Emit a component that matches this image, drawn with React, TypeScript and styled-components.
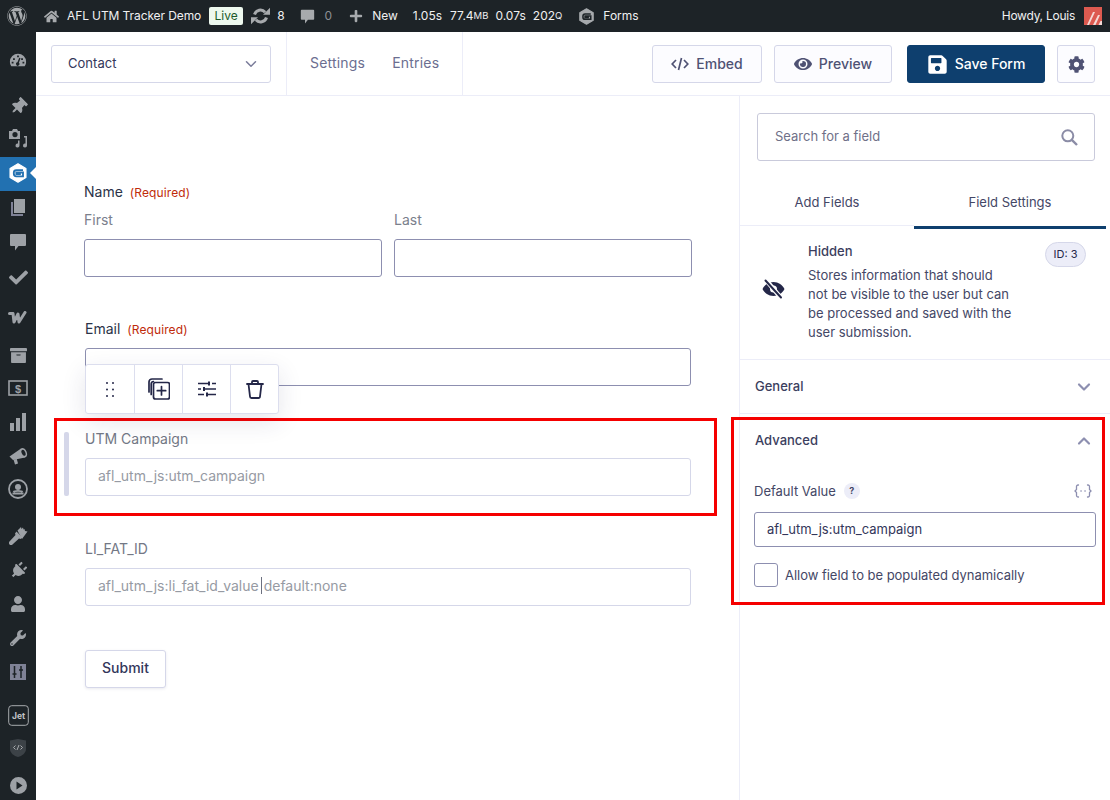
import React from "react";
import styled, { createGlobalStyle } from "styled-components";
import { FaWordpress, FaHome, FaPlus, FaEye, FaSave, FaCog, FaThumbtack, FaCheck, FaPlug, FaUser, FaWrench, FaArchive } from "react-icons/fa";
import { FiChevronDown, FiChevronUp } from "react-icons/fi";

const GlobalStyle = createGlobalStyle`
    html, body {
        margin: 0;
        padding: 0;
        height: 800px;
        overflow: hidden;
        background: #fff;
        font-family: Inter, "Liberation Sans", sans-serif;
    }
    * { box-sizing: border-box; }
`;

const Page = styled.div`
    position: relative;
    width: 1110px;
    height: 800px;
    overflow: hidden;
`;

/* admin bar */
const AdminBar = styled.header`
    height: 32px;
    background: #1d2327;
    display: flex;
    align-items: center;
    color: #f0f0f1;
    font-size: 12px;
    line-height: 32px;
`;

const BarItem = styled.span<{ $x: number; $dim?: boolean; $tight?: boolean }>`
    display: inline-flex;
    align-items: center;
    margin-left: ${(p) => p.$x}px;
    color: ${(p) => (p.$dim ? "#8c8f94" : "#f0f0f1")};
    letter-spacing: ${(p) => (p.$tight ? "-0.1px" : "0")};
    white-space: nowrap;
    svg { display: block; color: #a7aaad; }
`;

const LiveBadge = styled.span`
    margin-left: 8px;
    width: 34px;
    height: 18px;
    background: #edf8ee;
    color: #1a5a2a;
    border-radius: 2px;
    font-size: 12px;
    line-height: 18px;
    text-align: center;
`;

const SmallCaps = styled.span`
    font-size: 9.5px;
`;

const Howdy = styled.span`
    margin-left: auto;
    margin-right: 9px;
    color: #f0f0f1;
    letter-spacing: -0.25px;
`;

const Avatar = styled.svg`
    display: block;
    margin-right: 8px;
`;

const Body = styled.div`
    display: flex;
    height: 768px;
`;

/* left menu */
const SideMenu = styled.nav`
    width: 36px;
    flex: none;
    background: #1d2327;
    display: flex;
    flex-direction: column;
    padding-top: 11px;
`;

const SideItem = styled.div<{ $top: number; $active?: boolean; $turn?: number }>`
    position: relative;
    height: 34px;
    margin-top: ${(p) => p.$top}px;
    padding-bottom: ${(p) => (p.$active ? 2 : 0)}px;
    flex: none;
    display: flex;
    align-items: center;
    justify-content: center;
    background: ${(p) => (p.$active ? "#2271b1" : "transparent")};
    color: ${(p) => (p.$active ? "#fff" : "#9da1a6")};
    svg { transform: rotate(${(p) => p.$turn ?? 0}deg); }
    ${(p) =>
        p.$active &&
        `&::after {
            content: "";
            position: absolute;
            right: 0;
            top: 10px;
            border: 6px solid transparent;
            border-right-color: #fff;
            border-left: 0;
        }`}
`;

/* main area */
const Main = styled.main`
    flex: 1;
    display: flex;
    flex-direction: column;
    min-width: 0;
`;

const TopBar = styled.div`
    height: 64px;
    flex: none;
    display: flex;
    align-items: stretch;
    border-bottom: 1px solid #ecedf8;
    padding-right: 15px;
`;

const FormSelectCell = styled.div`
    width: 251px;
    padding: 13px 0 0 15px;
    border-right: 1px solid #ecedf8;
`;

const FormSelect = styled.div`
    width: 220px;
    height: 38px;
    border: 1px solid #d5d7e9;
    border-radius: 3px;
    display: flex;
    align-items: center;
    justify-content: space-between;
    padding: 0 10px 3px 16px;
    font-size: 13px;
    letter-spacing: 0.03px;
    color: #33365a;
    svg { color: #7a7c9a; margin-top: 3px; }
`;

const TopLinks = styled.div`
    width: 176px;
    display: flex;
    align-items: center;
    gap: 27px;
    padding: 0 0 2px 23px;
    border-right: 1px solid #ecedf8;
    font-size: 14px;
    letter-spacing: 0.2px;
    color: #6b6e90;
`;

const TopActions = styled.div`
    flex: 1;
    display: flex;
    justify-content: flex-end;
    padding-top: 13px;
`;

const ActionButton = styled.button<{ $w: number; $ml: number; $primary?: boolean }>`
    width: ${(p) => p.$w}px;
    height: 38px;
    margin-left: ${(p) => p.$ml}px;
    display: flex;
    align-items: center;
    justify-content: center;
    gap: 7px;
    padding: 0 0 2px;
    font: 500 14px Inter, "Liberation Sans", sans-serif;
    border-radius: 3px;
    border: 1px solid ${(p) => (p.$primary ? "#0e3f6e" : "#d5d7e9")};
    background: ${(p) => (p.$primary ? "#0e3f6e" : "#fcfcff")};
    color: ${(p) => (p.$primary ? "#fff" : "#4f5274")};
    svg { display: block; flex: none; margin-top: 2px; }
`;

const Workspace = styled.div`
    flex: 1;
    display: flex;
    min-height: 0;
`;

const Canvas = styled.section`
    width: 703px;
    flex: none;
    padding: 86px 0 0 49px;
`;

const FormColumn = styled.div`
    width: 606px;
`;

const FieldLabel = styled.div<{ $mt?: number; $muted?: boolean; $out?: boolean }>`
    height: 20px;
    margin-top: ${(p) => p.$mt ?? 0}px;
    margin-left: ${(p) => (p.$out ? -1 : 0)}px;
    font-size: 14px;
    line-height: 20px;
    color: ${(p) => (p.$muted ? "#737885" : "#2b3348")};
`;

const Required = styled.span`
    margin-left: 7px;
    font-size: 12px;
    letter-spacing: 0.1px;
    color: #c02b0a;
`;

const NameRow = styled.div`
    display: grid;
    grid-template-columns: 298px 298px;
    column-gap: 12px;
    margin: 8px 0 0 -1px;
`;

const SubLabel = styled.div`
    font-size: 14px;
    line-height: 20px;
    color: #7b808c;
`;

const TextBox = styled.div<{ $ghost?: boolean }>`
    height: 38px;
    margin-top: 9px;
    padding-left: 12px;
    border: 1px solid ${(p) => (p.$ghost ? "#d5d7e9" : "#8d8fb0")};
    border-radius: 3px;
    font-size: 14px;
    line-height: 34px;
    color: #969aa3;
    background: #fff;
`;

const Caret = styled.span`
    margin: 0 2px;
    border-left: 1px solid #6c7080;
`;

const EmailField = styled.div`
    position: relative;
`;

const FieldToolbar = styled.div`
    position: absolute;
    left: 0;
    top: 45px;
    z-index: 2;
    display: flex;
    width: 194px;
    height: 50px;
    background: #fff;
    border: 1px solid #dcdeee;
    border-radius: 3px;
    box-shadow: 0 8px 24px rgba(40, 44, 90, 0.12);
`;

const ToolCell = styled.div`
    width: 48px;
    flex: none;
    display: flex;
    align-items: center;
    justify-content: center;
    color: #242748;
    & + & { border-left: 1px solid #dcdeee; }
`;

const SelectedField = styled.div`
    position: relative;
    &::before {
        content: "";
        position: absolute;
        left: -21px;
        top: 3px;
        width: 5px;
        height: 64px;
        border-radius: 2px;
        background: #d5d7e9;
    }
`;

const SubmitButton = styled.button`
    display: block;
    width: 81px;
    height: 38px;
    margin-top: 44px;
    padding: 0 0 3px;
    border: 1px solid #d5d7e9;
    border-radius: 3px;
    background: #fff;
    box-shadow: 0 1px 3px rgba(40, 44, 90, 0.1);
    font: 500 14px Inter, "Liberation Sans", sans-serif;
    color: #33365a;
`;

/* right panel */
const Panel = styled.aside`
    flex: 1;
    border-left: 1px solid #ecedf8;
    min-width: 0;
`;

const SearchBox = styled.div`
    height: 48px;
    margin: 17px 15px 0 17px;
    display: flex;
    align-items: center;
    justify-content: space-between;
    padding: 0 16px 2px 17px;
    border: 1px solid #c9cadb;
    border-radius: 3px;
    font-size: 13px;
    color: #6f7088;
    svg { display: block; margin-top: 2px; }
`;

const Tabs = styled.div`
    display: flex;
    align-items: flex-start;
    height: 68px;
    padding-top: 15px;
`;

const Tab = styled.div<{ $active?: boolean }>`
    width: ${(p) => (p.$active ? 192 : 174)}px;
    height: ${(p) => (p.$active ? 53 : 50)}px;
    text-align: center;
    font-size: 13px;
    line-height: 52px;
    color: #444766;
    border-bottom: ${(p) => (p.$active ? "3px solid #0e3f6e" : "1px solid #ecedf8")};
`;

const FieldInfo = styled.div`
    position: relative;
    height: 131px;
    display: flex;
    padding: 13px 0 0 22px;
    border-bottom: 1px solid #ecedf8;
`;

const InfoIcon = styled.div`
    width: 46px;
    flex: none;
    padding-top: 37px;
    svg { display: block; }
`;

const InfoTitle = styled.div`
    font-size: 13px;
    line-height: 18px;
    font-weight: 500;
    color: #3b3e5e;
`;

const InfoText = styled.p`
    width: 208px;
    margin: 6px 0 0;
    font-size: 13px;
    line-height: 19px;
    color: #444766;
`;

const IdBadge = styled.span`
    position: absolute;
    top: 13px;
    left: 305px;
    width: 41px;
    height: 25px;
    border: 1px solid #d5d7e9;
    border-radius: 13px;
    background: #ecedf8;
    font-size: 11px;
    line-height: 23px;
    text-align: center;
    color: #242748;
`;

const AccordionHead = styled.div<{ $line?: boolean }>`
    height: 54px;
    display: flex;
    align-items: center;
    justify-content: space-between;
    padding: 0 16px 2px 15px;
    font-size: 13px;
    font-weight: 500;
    color: #3b3e5e;
    border-bottom: ${(p) => (p.$line ? "1px solid #ecedf8" : "0")};
    svg { color: #8d8fb0; stroke-width: 2.6; margin-top: 2px; }
`;

const AdvancedBody = styled.div`
    padding: 0 14px;
`;

const ValueLabelRow = styled.div`
    display: flex;
    align-items: center;
    height: 20px;
    margin-top: 13px;
    font-size: 13px;
    color: #444766;
    svg { margin: 0 4px 0 auto; display: block; color: #8d8fb0; }
`;

const HelpDot = styled.span`
    width: 16px;
    height: 16px;
    margin-left: 8px;
    border-radius: 50%;
    background: #ecedf8;
    font-size: 9px;
    font-weight: 700;
    line-height: 16px;
    text-align: center;
    color: #444766;
`;

const ValueInput = styled.div`
    width: 342px;
    height: 35px;
    margin-top: 11px;
    padding-left: 12px;
    border: 1px solid #8d8fb0;
    border-radius: 3px;
    font-size: 13px;
    line-height: 32px;
    color: #33365a;
`;

const CheckRow = styled.label`
    display: flex;
    align-items: center;
    gap: 7px;
    margin-top: 16px;
    font-size: 13px;
    letter-spacing: -0.03px;
    color: #444766;
`;

const CheckBox = styled.span`
    width: 24px;
    height: 24px;
    border: 1px solid #8d8fb0;
    border-radius: 3px;
`;

const Callout = styled.div<{ $l: number; $t: number; $w: number; $h: number }>`
    position: absolute;
    left: ${(p) => p.$l}px;
    top: ${(p) => p.$t}px;
    width: ${(p) => p.$w}px;
    height: ${(p) => p.$h}px;
    border: 3px solid #f50000;
    pointer-events: none;
`;

const GravityIcon = ({ size, fg, bg }: { size: number; fg: string; bg: string }) => (
    <svg width={size} height={size} viewBox="0 0 24 24">
        <path d="M12 1 21.500 6.500v11L12 23 2.500 17.500v-11z" fill={fg} stroke={fg} strokeWidth="1.500" strokeLinejoin="round" />
        <path d="M18 8.500H10a3 3 0 0 0-3 3v1.500a3 3 0 0 0 3 3h8v-4.600h-8v1.900h5.400" fill="none" stroke={bg} strokeWidth="2.200" />
    </svg>
);

const DashIcon = () => (
    <svg width="18" height="18" viewBox="0 0 20 20" fill="currentColor">
        <path fillRule="evenodd" d="M10 3a9 9 0 0 0-9 9c0 2 .6 3.600 1.600 5h14.800c1-1.400 1.600-3 1.600-5a9 9 0 0 0-9-9zM9 5h2v2H9zM4.500 8h2v2h-2zm9 0h2v2h-2zM3 12h2v2H3zm12 0h2v2h-2zm-3.600-4.500 1.400.5-1.800 5a1.900 1.900 0 1 1-1.600-.4z" />
    </svg>
);

const MediaIcon = () => (
    <svg width="20" height="20" viewBox="0 0 20 20" fill="currentColor">
        <path fillRule="evenodd" d="M5 1h4l1 2h2v8H1V3h3zm2 3a2.600 2.600 0 1 0 0 5.200a2.600 2.600 0 0 0 0-5.200z" />
        <path d="M16 8h3v9.500a2 2 0 1 1-1.500-1.900V9.500H16zM10 12.500h1.500v5a2 2 0 1 1-1.500-1.900z" />
    </svg>
);

const PagesIcon = () => (
    <svg width="16" height="18" viewBox="0 0 16 18">
        <path d="M1 4h2v12h10v2H1z" fill="#7f8296" />
        <path d="M4 1h11v14H4z" fill="currentColor" />
    </svg>
);

const BubbleIcon = ({ size }: { size: number }) => (
    <svg width={size} height={size} viewBox="0 0 18 18" fill="currentColor">
        <path d="M2 1h14a1 1 0 0 1 1 1v10a1 1 0 0 1-1 1H9.500L6 17.500V13H2a1 1 0 0 1-1-1V2a1 1 0 0 1 1-1z" />
    </svg>
);

const UpdateIcon = () => (
    <svg width="19" height="18" viewBox="0 0 19 18" fill="none" stroke="currentColor" strokeWidth="3">
        <path d="M3.500 7.500a6.200 6.200 0 0 1 10.600-2.300" />
        <path d="M15.500 10.500a6.200 6.200 0 0 1-10.600 2.300" />
        <path d="M12 7.800h7V.8zM7 10.200H0v7z" fill="currentColor" stroke="none" />
    </svg>
);

const WooIcon = () => (
    <svg width="20" height="14" viewBox="0 0 20 14" fill="none" stroke="currentColor" strokeWidth="3" strokeLinejoin="round" strokeLinecap="round">
        <path d="M1.500 2.500H5L6 11 10 3l1 8 6-9.500" />
    </svg>
);

const DollarBox = () => (
    <svg width="20" height="16" viewBox="0 0 20 16">
        <rect x="1" y="1" width="18" height="14" fill="none" stroke="currentColor" strokeWidth="1.600" />
        <text x="10" y="12.500" fontFamily="Liberation Sans, sans-serif" fontWeight="700" fontSize="11" textAnchor="middle" fill="currentColor">$</text>
    </svg>
);

const BarsIcon = () => (
    <svg width="16" height="18" viewBox="0 0 16 18" fill="currentColor">
        <rect x="0" y="10" width="4" height="8" />
        <rect x="6" y="5" width="4" height="13" />
        <rect x="12" y="0" width="4" height="18" />
    </svg>
);

const HornIcon = () => (
    <svg width="19" height="18" viewBox="0 0 19 18">
        <path d="M.5 9.500 12 1.500l4 9-12 2.500z" fill="currentColor" />
        <path d="M4.500 12.500 6 17.500l3-1-1.200-4.500z" fill="currentColor" />
        <ellipse cx="14.500" cy="5.800" rx="3.300" ry="5" transform="rotate(-24 14.500 5.800)" fill="currentColor" />
        <ellipse cx="14.500" cy="5.800" rx="1.800" ry="3.200" transform="rotate(-24 14.500 5.800)" fill="#1d2327" />
    </svg>
);

const UserCircle = () => (
    <svg width="20" height="20" viewBox="0 0 20 20" fill="none" stroke="currentColor">
        <circle cx="10" cy="10" r="9" strokeWidth="1.800" />
        <circle cx="10" cy="8" r="3" fill="currentColor" stroke="none" />
        <path d="M4.500 14.500h11M5.500 13c1-1.500 8-1.500 9 0" strokeWidth="1.800" />
    </svg>
);

const BrushIcon = () => (
    <svg width="19" height="19" viewBox="0 0 19 19" fill="currentColor">
        <path d="M8.500 4.500 12 1l.5 2L14 1.500l.5 2 1-.5.5 2 2.500.5-5.500 7.500z" />
        <path d="M7.500 5.500l6 6-2 1.500-1.500-.5L3.500 18.500a1.800 1.800 0 0 1-3-3L6.500 9 6 7.500z" />
    </svg>
);

const SlidersBox = () => (
    <svg width="16" height="16" viewBox="0 0 16 16">
        <rect width="16" height="16" fill="#7f8296" />
        <path d="M4.500 2v12M11 2v12M2.500 10h4M9 6h4" stroke="#1d2327" strokeWidth="1.500" />
    </svg>
);

const JetIcon = () => (
    <svg width="21" height="21" viewBox="0 0 21 21">
        <rect x=".7" y=".7" width="19.600" height="19.600" rx="3" fill="none" stroke="#a7aaad" strokeWidth="1" />
        <text x="10.500" y="14" fontFamily="Inter, sans-serif" fontWeight="700" fontSize="8.500" textAnchor="middle" fill="#c3c4c7">Jet</text>
    </svg>
);

const ShieldIcon = () => (
    <svg width="18" height="20" viewBox="0 0 18 20">
        <path d="M1 2.500 9 1l8 1.500V11c0 4-4 7-8 8-4-1-8-4-8-8z" fill="#3c4247" />
        <path d="M6.500 7.500 4.500 9.500l2 2M11.500 7.500l2 2-2 2M10 7l-2 5" fill="none" stroke="#a7aaad" strokeWidth="1" />
    </svg>
);

const PlayCircle = () => (
    <svg width="17" height="17" viewBox="0 0 17 17" fill="currentColor">
        <path fillRule="evenodd" d="M8.500 0a8.500 8.500 0 1 1 0 17a8.500 8.500 0 0 1 0-17zM6.500 4.500v8l6-4z" />
    </svg>
);

const GripIcon = () => (
    <svg width="8" height="15" viewBox="0 0 8 15" fill="#242748">
        {[1, 7.5, 14].map((y) => (
            <React.Fragment key={y}>
                <circle cx="1" cy={y} r="1" />
                <circle cx="7" cy={y} r="1" />
            </React.Fragment>
        ))}
    </svg>
);

const DuplicateIcon = () => (
    <svg width="22" height="22" viewBox="0 0 22 22" fill="none" stroke="#242748" strokeWidth="1.700" strokeLinecap="round" strokeLinejoin="round">
        <rect x="5.500" y="4.500" width="16" height="16.500" rx="2" />
        <path d="M13.500 8.500v8.500M9.300 12.700h8.400" />
        <path d="M1 14V4a3 3 0 0 1 3-3h10" />
        <path d="M3.200 16.500V6A2.500 2.500 0 0 1 5.500 3.500" />
    </svg>
);

const SlidersIcon = () => (
    <svg width="18" height="16" viewBox="0 0 18 16" fill="none" stroke="#242748" strokeWidth="1.500">
        <path d="M0 2.500h10M14 2.500h4M0 8h3M7 8h11M0 13.500h6M10 13.500h8" />
        <path d="M11 .5v4M6 6v4M9 11.500v4" strokeWidth="2" />
    </svg>
);

const TrashIcon = () => (
    <svg width="18" height="19" viewBox="0 0 18 19" fill="none" stroke="#242748" strokeWidth="1.800" strokeLinecap="round" strokeLinejoin="round">
        <path d="M1 4h16M6 4V2a1 1 0 0 1 1-1h4a1 1 0 0 1 1 1v2" />
        <path d="M2.500 4l1.500 12.500a1.500 1.500 0 0 0 1.500 1.500h7a1.500 1.500 0 0 0 1.500-1.500L15.500 4" />
    </svg>
);

const MergeTagIcon = () => (
    <svg width="18" height="14" viewBox="0 0 18 14" fill="none" stroke="currentColor" strokeWidth="1.300" strokeLinecap="round">
        <path d="M4.500 1H4a1.500 1.500 0 0 0-1.500 1.500v3L1 7l1.500 1.500v3A1.500 1.500 0 0 0 4 13h.5" />
        <path d="M13.500 1h.5a1.500 1.500 0 0 1 1.500 1.500v3L17 7l-1.500 1.500v3A1.500 1.500 0 0 1 14 13h-.5" />
        <path d="M7 7h.1M11 7h.1" strokeWidth="1.600" />
    </svg>
);

const CodeGlyph = () => (
    <svg width="18" height="14" viewBox="0 0 18 14" fill="none" stroke="currentColor" strokeWidth="1.700">
        <path d="M5 3 1.200 7 5 11M13 3l3.800 4L13 11M10.500 1 7.500 13" />
    </svg>
);

const SearchGlyph = () => (
    <svg width="17" height="17" viewBox="0 0 17 17" fill="none" stroke="#8b8ca6" strokeWidth="2">
        <circle cx="6.800" cy="6.800" r="5.500" />
        <path d="M10.800 10.800 16 16" strokeWidth="2.400" />
    </svg>
);

const HiddenGlyph = () => (
    <svg width="23" height="20" viewBox="0 0 23 20">
        <path fillRule="evenodd" d="M11.500 3C16.500 3 20.500 6 22.500 10 20.500 14 16.500 17 11.500 17S2.500 14 .5 10C2.500 6 6.500 3 11.500 3zm0 3.500a3.500 3.500 0 1 0 0 7a3.500 3.500 0 0 0 0-7z" fill="#242748" />
        <path d="M4 1l15 18" stroke="#fff" strokeWidth="4.500" />
        <path d="M3.500 1.500l15.500 17" stroke="#242748" strokeWidth="2" strokeLinecap="round" />
    </svg>
);

const menu: { top: number; active?: boolean; turn?: number; icon: React.ReactNode }[] = [
    { top: 0, icon: <DashIcon /> },
    { top: 12, turn: 45, icon: <FaThumbtack size={17} /> },
    { top: -2, icon: <MediaIcon /> },
    { top: 2, active: true, icon: <GravityIcon size={20} fg="#fff" bg="#2271b1" /> },
    { top: -1, icon: <PagesIcon /> },
    { top: 1, icon: <BubbleIcon size={18} /> },
    { top: 1, icon: <FaCheck size={19} /> },
    { top: 7, icon: <WooIcon /> },
    { top: 3, icon: <FaArchive size={17} /> },
    { top: -1, icon: <DollarBox /> },
    { top: 0, icon: <BarsIcon /> },
    { top: 0, icon: <HornIcon /> },
    { top: -1, icon: <UserCircle /> },
    { top: 12, icon: <BrushIcon /> },
    { top: 1, turn: 45, icon: <FaPlug size={17} /> },
    { top: 0, icon: <FaUser size={16} /> },
    { top: 0, icon: <FaWrench size={16} /> },
    { top: 0, icon: <SlidersBox /> },
    { top: 9, icon: <JetIcon /> },
    { top: -1, icon: <ShieldIcon /> },
    { top: 3, icon: <PlayCircle /> },
];

export default function App() {
    return (
        <Page>
            <GlobalStyle />
            <AdminBar>
                <BarItem $x={7}><FaWordpress size={20} /></BarItem>
                <BarItem $x={17}><FaHome size={15} /></BarItem>
                <BarItem $x={8} $tight>AFL UTM Tracker Demo</BarItem>
                <LiveBadge>Live</LiveBadge>
                <BarItem $x={8}><UpdateIcon /></BarItem>
                <BarItem $x={7}>8</BarItem>
                <BarItem $x={15}><BubbleIcon size={15} /></BarItem>
                <BarItem $x={10} $dim>0</BarItem>
                <BarItem $x={17}><FaPlus size={14} /></BarItem>
                <BarItem $x={9}>New</BarItem>
                <BarItem $x={15}>1.05s</BarItem>
                <BarItem $x={8}>77.4<SmallCaps>MB</SmallCaps></BarItem>
                <BarItem $x={7}>0.07s</BarItem>
                <BarItem $x={7}>202<SmallCaps>Q</SmallCaps></BarItem>
                <BarItem $x={16}><GravityIcon size={17} fg="#a7aaad" bg="#1d2327" /></BarItem>
                <BarItem $x={8}>Forms</BarItem>
                <Howdy>Howdy, Louis</Howdy>
                <Avatar width="18" height="18" viewBox="0 0 18 18">
                    <rect width="18" height="18" fill="#dd5a50" />
                    <path d="M3 18 9 5l2 0-6 13zM9 18l5-10 2 0-4.500 10zM14.500 18l2-4 1.500 0v4z" fill="#f6d8d4" />
                </Avatar>
            </AdminBar>
            <Body>
                <SideMenu>
                    {menu.map((m, i) => (
                        <SideItem key={i} $top={m.top} $active={m.active} $turn={m.turn}>{m.icon}</SideItem>
                    ))}
                </SideMenu>
                <Main>
                    <TopBar>
                        <FormSelectCell>
                            <FormSelect>Contact<FiChevronDown size={18} /></FormSelect>
                        </FormSelectCell>
                        <TopLinks><span>Settings</span><span>Entries</span></TopLinks>
                        <TopActions>
                            <ActionButton $w={110} $ml={0}><CodeGlyph />Embed</ActionButton>
                            <ActionButton $w={118} $ml={12}><FaEye size={18} />Preview</ActionButton>
                            <ActionButton $w={138} $ml={15} $primary><FaSave size={21} />Save Form</ActionButton>
                            <ActionButton $w={38} $ml={12}><FaCog size={17} /></ActionButton>
                        </TopActions>
                    </TopBar>
                    <Workspace>
                        <Canvas>
                            <FormColumn>
                                <FieldLabel $out>Name<Required>(Required)</Required></FieldLabel>
                                <NameRow>
                                    <div>
                                        <SubLabel>First</SubLabel>
                                        <TextBox />
                                    </div>
                                    <div>
                                        <SubLabel>Last</SubLabel>
                                        <TextBox />
                                    </div>
                                </NameRow>
                                <EmailField>
                                    <FieldLabel $mt={42}>Email<Required>(Required)</Required></FieldLabel>
                                    <TextBox />
                                    <FieldToolbar>
                                        <ToolCell><GripIcon /></ToolCell>
                                        <ToolCell><DuplicateIcon /></ToolCell>
                                        <ToolCell><SlidersIcon /></ToolCell>
                                        <ToolCell><TrashIcon /></ToolCell>
                                    </FieldToolbar>
                                </EmailField>
                                <SelectedField>
                                    <FieldLabel $mt={43} $muted>UTM Campaign</FieldLabel>
                                    <TextBox $ghost>afl_utm_js:utm_campaign</TextBox>
                                </SelectedField>
                                <FieldLabel $mt={43} $muted>LI_FAT_ID</FieldLabel>
                                <TextBox $ghost>afl_utm_js:li_fat_id_value<Caret />default:none</TextBox>
                                <SubmitButton>Submit</SubmitButton>
                            </FormColumn>
                        </Canvas>
                        <Panel>
                            <SearchBox>Search for a field<SearchGlyph /></SearchBox>
                            <Tabs>
                                <Tab>Add Fields</Tab>
                                <Tab $active>Field Settings</Tab>
                            </Tabs>
                            <FieldInfo>
                                <InfoIcon><HiddenGlyph /></InfoIcon>
                                <div>
                                    <InfoTitle>Hidden</InfoTitle>
                                    <InfoText>Stores information that should not be visible to the user but can be processed and saved with the user submission.</InfoText>
                                </div>
                                <IdBadge>ID: 3</IdBadge>
                            </FieldInfo>
                            <AccordionHead $line>General<FiChevronDown size={20} /></AccordionHead>
                            <AccordionHead>Advanced<FiChevronUp size={20} /></AccordionHead>
                            <AdvancedBody>
                                <ValueLabelRow>
                                    Default Value<HelpDot>?</HelpDot><MergeTagIcon />
                                </ValueLabelRow>
                                <ValueInput>afl_utm_js:utm_campaign</ValueInput>
                                <CheckRow><CheckBox />Allow field to be populated dynamically</CheckRow>
                            </AdvancedBody>
                        </Panel>
                    </Workspace>
                </Main>
            </Body>
            <Callout $l={54} $t={418} $w={663} $h={98} />
            <Callout $l={731} $t={417} $w={374} $h={188} />
        </Page>
    );
}
